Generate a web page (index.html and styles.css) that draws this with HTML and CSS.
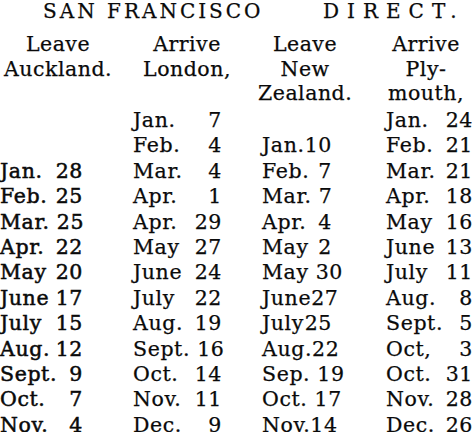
FILE: index.html
```html
<!DOCTYPE html>
<html>
<head>
<meta charset="utf-8">
<link rel="stylesheet" href="styles.css">
</head>
<body>
<div class="page">
  <div class="title"><span class="t1">SAN FRANCISCO</span><span class="t2">DIRECT.</span></div>
  <div class="heads">
    <div class="head">Leave<br>Auckland.</div>
    <div class="head">Arrive<br>London,</div>
    <div class="head">Leave<br>New<br>Zealand.</div>
    <div class="head">Arrive<br>Ply-<br>mouth,</div>
  </div>
  <div class="rows">
    <div class="row"><div></div><div class="d c2"><span>Jan.&nbsp;</span><span>7</span></div><div></div><div class="d c4"><span>Jan.&nbsp;</span><span>24</span></div></div>
    <div class="row"><div></div><div class="d c2"><span>Feb.&nbsp;</span><span>4</span></div><div class="d c3"><span>Jan.</span><span>10</span></div><div class="d c4"><span>Feb.&nbsp;</span><span>21</span></div></div>
    <div class="row"><div class="d c1"><span>Jan.&nbsp;</span><span>28</span></div><div class="d c2"><span>Mar.&nbsp;</span><span>4</span></div><div class="d c3"><span>Feb.&nbsp;</span><span>7</span></div><div class="d c4"><span>Mar.&nbsp;</span><span>21</span></div></div>
    <div class="row"><div class="d c1"><span>Feb.&nbsp;</span><span>25</span></div><div class="d c2"><span>Apr.&nbsp;</span><span>1</span></div><div class="d c3"><span>Mar.&nbsp;</span><span>7</span></div><div class="d c4"><span>Apr.&nbsp;</span><span>18</span></div></div>
    <div class="row"><div class="d c1"><span>Mar.&nbsp;</span><span>25</span></div><div class="d c2"><span>Apr.&nbsp;</span><span>29</span></div><div class="d c3"><span>Apr.&nbsp;</span><span>4</span></div><div class="d c4"><span>May&nbsp;</span><span>16</span></div></div>
    <div class="row"><div class="d c1"><span>Apr.&nbsp;</span><span>22</span></div><div class="d c2"><span>May&nbsp;</span><span>27</span></div><div class="d c3"><span>May&nbsp;</span><span>2</span></div><div class="d c4"><span>June&nbsp;</span><span>13</span></div></div>
    <div class="row"><div class="d c1"><span>May&nbsp;</span><span>20</span></div><div class="d c2"><span>June&nbsp;</span><span>24</span></div><div class="d c3"><span>May&nbsp;</span><span>30</span></div><div class="d c4"><span>July&nbsp;</span><span>11</span></div></div>
    <div class="row"><div class="d c1"><span>June</span><span>17</span></div><div class="d c2"><span>July&nbsp;</span><span>22</span></div><div class="d c3"><span>June</span><span>27</span></div><div class="d c4"><span>Aug.&nbsp;</span><span>8</span></div></div>
    <div class="row"><div class="d c1"><span>July&nbsp;</span><span>15</span></div><div class="d c2"><span>Aug.&nbsp;</span><span>19</span></div><div class="d c3"><span>July</span><span>25</span></div><div class="d c4"><span>Sept.&nbsp;</span><span>5</span></div></div>
    <div class="row"><div class="d c1"><span>Aug.</span><span>12</span></div><div class="d c2"><span>Sept.&nbsp;</span><span>16</span></div><div class="d c3"><span>Aug.</span><span>22</span></div><div class="d c4"><span>Oct,&nbsp;</span><span>3</span></div></div>
    <div class="row"><div class="d c1"><span>Sept.&nbsp;</span><span>9</span></div><div class="d c2"><span>Oct.&nbsp;</span><span>14</span></div><div class="d c3"><span>Sep.&nbsp;</span><span>19</span></div><div class="d c4"><span>Oct.&nbsp;</span><span>31</span></div></div>
    <div class="row"><div class="d c1"><span>Oct.&nbsp;</span><span>7</span></div><div class="d c2"><span>Nov.&nbsp;</span><span>11</span></div><div class="d c3"><span>Oct.&nbsp;</span><span>17</span></div><div class="d c4"><span>Nov.&nbsp;</span><span>28</span></div></div>
    <div class="row"><div class="d c1"><span>Nov.&nbsp;</span><span>4</span></div><div class="d c2"><span>Dec.&nbsp;</span><span>9</span></div><div class="d c3"><span>Nov.</span><span>14</span></div><div class="d c4"><span>Dec.&nbsp;</span><span>26</span></div></div>
  </div>
</div>
</body>
</html>
```

FILE: styles.css
```css
html, body {
  margin: 0;
  padding: 0;
  background: #ffffff;
}
body {
  width: 472px;
  height: 432px;
  overflow: hidden;
  color: #0a0a0a;
  font-family: "DejaVu Serif", "Liberation Serif", serif;
  -webkit-text-stroke: 0.25px #0a0a0a;
}
.page {
  width: 472px;
}
.title {
  font-size: 20px;
  line-height: 22px;
  letter-spacing: 3px;
  white-space: nowrap;
  padding-left: 43px;
  margin-bottom: 10px;
}
.t1 {
  display: inline-block;
  width: 280px;
}
.t2 {
  letter-spacing: 8px;
}
.heads {
  display: grid;
  grid-template-columns: 116px 94px 94px 100px;
  column-gap: 24px;
  font-size: 20.5px;
  line-height: 24.5px;
  letter-spacing: 0.5px;
  text-align: center;
  white-space: nowrap;
}
.rows {
  margin-top: 2.5px;
  font-size: 20.5px;
  line-height: 25.4px;
  letter-spacing: 0.6px;
  white-space: nowrap;
}
.row {
  display: grid;
  grid-template-columns: 133px 129px 124px 1fr;
  height: 25.4px;
}
.d {
  display: flex;
  justify-content: space-between;
}
.c1 {
  width: 83px;
  -webkit-text-stroke: 0.5px #0a0a0a;
}
.c2 { width: 89px; }
.c3 { width: 70px; }
.c4 { width: 87px; }
```
